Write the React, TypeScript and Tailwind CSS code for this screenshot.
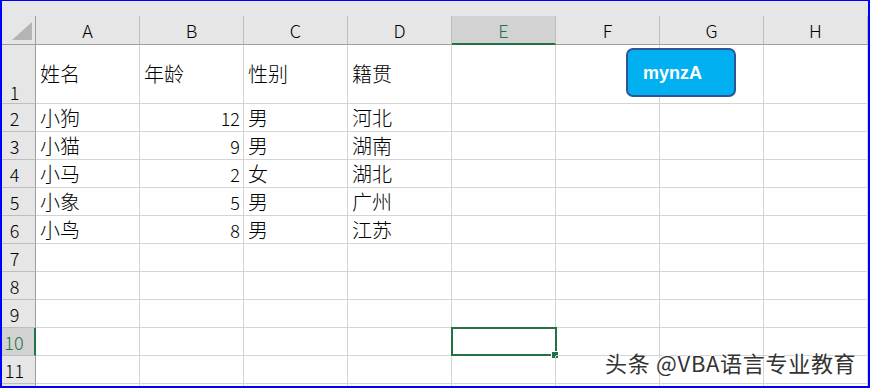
import React from 'react'

const cols = ['A', 'B', 'C', 'D', 'E', 'F', 'G', 'H']

const rows: (string | number)[][] = [
  ['姓名', '年龄', '性别', '籍贯'],
  ['小狗', 12, '男', '河北'],
  ['小猫', 9, '男', '湖南'],
  ['小马', 2, '女', '湖北'],
  ['小象', 5, '男', '广州'],
  ['小鸟', 8, '男', '江苏'],
]

function Cell({ value, selected }: { value?: string | number; selected?: boolean }) {
  const isNum = typeof value === 'number'
  return (
    <div
      className={`relative flex items-center border-r border-b border-[#d4d4d4] ${
        isNum ? 'justify-end pr-[3px] text-[18px]' : 'pl-[4px] text-[20px]'
      }`}
    >
      {value !== undefined && <span className="leading-none whitespace-nowrap">{value}</span>}
      {selected && (
        <div className="absolute left-[-1px] top-[-1px] right-[-2px] bottom-[-1px] border-2 border-[#217346]">
          <div className="absolute right-[-3px] bottom-[-4px] w-[6px] h-[6px] bg-[#217346] outline outline-1 outline-white" />
        </div>
      )}
    </div>
  )
}

function RowHead({ n, tall, active }: { n?: number; tall?: boolean; active?: boolean }) {
  return (
    <div
      className={`flex justify-center pr-2 text-[18px] border-b border-[#bdbdbd] ${
        tall ? 'items-end pb-[2px]' : 'items-center'
      } ${
        active
          ? 'bg-[#d2d2d2] text-[#217346] border-r-2 border-r-[#217346]'
          : 'bg-[#e6e6e6] text-black border-r border-r-[#9e9e9e]'
      }`}
    >
      {n !== undefined && <span className="leading-none">{n}</span>}
    </div>
  )
}

export default function App() {
  const rowHeights = ['29px', '59px', ...Array(11).fill('28px')].join(' ')
  return (
    <div className="relative w-[870px] h-[388px] overflow-hidden bg-white border-l-2 border-r-2 border-t border-b-2 border-[#0000ff] font-['Noto_Sans_CJK_SC',sans-serif] font-light text-black">
      <div className="h-[15px] bg-[#e6e6e6]" />
      <div className="grid grid-cols-[34px_repeat(8,104px)]" style={{ gridTemplateRows: rowHeights }}>
        {/* corner */}
        <div className="bg-[#e6e6e6] border-r border-b border-[#9e9e9e] flex items-start">
          <svg width="33" height="28" viewBox="0 0 33 28">
            <polygon points="10,24 30,24 30,6" fill="#b4b4b4" />
          </svg>
        </div>
        {cols.map((c) =>
          c === 'E' ? (
            <div
              key={c}
              className="flex items-center justify-center text-[18px] bg-[#d2d2d2] text-[#217346] border-r border-r-[#bdbdbd] border-b-2 border-b-[#217346]"
            >
              <span className="leading-none">{c}</span>
            </div>
          ) : (
            <div
              key={c}
              className="flex items-center justify-center text-[18px] bg-[#e6e6e6] border-r border-r-[#bdbdbd] border-b border-b-[#9e9e9e]"
            >
              <span className="leading-none">{c}</span>
            </div>
          )
        )}

        {Array.from({ length: 12 }).map((_, ri) => {
          const data = rows[ri] || []
          return (
            <React.Fragment key={ri}>
              <RowHead n={ri < 11 ? ri + 1 : undefined} tall={ri === 0} active={ri === 9} />
              {cols.map((c, ci) => (
                <Cell key={c} value={data[ci]} selected={ri === 9 && c === 'E'} />
              ))}
            </React.Fragment>
          )
        })}
      </div>

      {/* shape button */}
      <div className="absolute left-[624px] top-[47px] w-[110px] h-[49px] rounded-[7px] bg-[#00b0f0] border-2 border-[#2f5597] flex items-center pl-[15px]">
        <span className="text-white font-bold text-[18px] leading-none font-['Liberation_Sans',Arial,sans-serif]">
          mynzA
        </span>
      </div>

      {/* watermark */}
      <div className="absolute left-[603px] top-[350px] text-[22px] font-normal leading-none tracking-[0.7px] text-[#333333] whitespace-nowrap [text-shadow:1px_1px_1px_#ffffff,-1px_-1px_1px_#ffffff]">
        头条 @VBA语言专业教育
      </div>
    </div>
  )
}
